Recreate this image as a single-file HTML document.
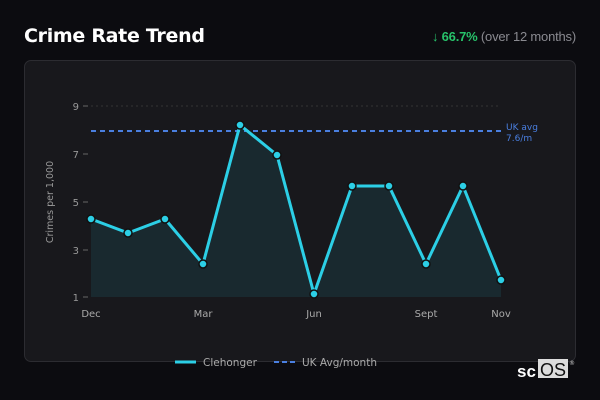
<!DOCTYPE html>
<html><head><meta charset="utf-8"><style>
body{margin:0;width:600px;height:400px;background:#0c0c10;font-family:"Liberation Sans","DejaVu Sans",sans-serif;position:relative;overflow:hidden}
.t{position:absolute;left:24px;top:25px;color:#fff;font-weight:bold;font-size:19px;font-family:"DejaVu Sans",sans-serif;letter-spacing:-0.3px}
.r{position:absolute;right:24px;top:29px;font-size:13px;color:#8a8a90;font-family:"Liberation Sans",sans-serif;letter-spacing:-0.2px}
.r b{color:#27c26a}
.card{position:absolute;left:24px;top:60px;width:550px;height:300px;border:1px solid #2c2c31;border-radius:7px;background:#18181c}
svg{position:absolute;left:0;top:0}
</style></head><body>
<div class="t">Crime Rate Trend</div>
<div class="r"><b>↓ 66.7%</b> (over 12 months)</div>
<div class="card"></div>
<svg width="600" height="400" font-family="DejaVu Sans,sans-serif">
<line x1="91" y1="106" x2="501" y2="106" stroke="#333" stroke-dasharray="2,3"/>
<g fill="#999" font-size="10" text-anchor="end">
<text x="79" y="110">9</text><text x="79" y="158">7</text><text x="79" y="206">5</text><text x="79" y="254">3</text><text x="79" y="301">1</text></g>
<g stroke="#666"><line x1="83" y1="106" x2="88" y2="106"/><line x1="83" y1="154" x2="88" y2="154"/><line x1="83" y1="202" x2="88" y2="202"/><line x1="83" y1="250" x2="88" y2="250"/><line x1="83" y1="297" x2="88" y2="297"/></g>
<text transform="translate(53,202) rotate(-90)" fill="#999" font-size="9.5" text-anchor="middle">Crimes per 1,000</text>
<polygon fill="#19292f" points="91,297 91,219 128,233 165,219 203,264 240,125 277,155 314,294 352,186 389,186 426,264 463,186 501,280 501,297"/>
<line x1="91" y1="131" x2="501" y2="131" stroke="#4a7fe0" stroke-width="2" stroke-dasharray="5,4"/>
<text x="506" y="130" fill="#4a7fe0" font-size="9">UK avg</text><text x="506" y="141" fill="#4a7fe0" font-size="9">7.6/m</text>
<polyline fill="none" stroke="#2ccfe6" stroke-width="3" stroke-linejoin="round" points="91,219 128,233 165,219 203,264 240,125 277,155 314,294 352,186 389,186 426,264 463,186 501,280"/>
<g fill="#2ccfe6" stroke="#111" stroke-width="1.5">
<circle cx="91" cy="219" r="4"/><circle cx="128" cy="233" r="4"/><circle cx="165" cy="219" r="4"/><circle cx="203" cy="264" r="4"/><circle cx="240" cy="125" r="4"/><circle cx="277" cy="155" r="4"/><circle cx="314" cy="294" r="4"/><circle cx="352" cy="186" r="4"/><circle cx="389" cy="186" r="4"/><circle cx="426" cy="264" r="4"/><circle cx="463" cy="186" r="4"/><circle cx="501" cy="280" r="4"/></g>
<g fill="#aaa" font-size="10" text-anchor="middle">
<text x="91" y="317">Dec</text><text x="203" y="317">Mar</text><text x="314" y="317">Jun</text><text x="426" y="317">Sept</text><text x="501" y="317">Nov</text></g>
<line x1="175" y1="362" x2="196" y2="362" stroke="#2ccfe6" stroke-width="3"/>
<text x="203" y="366" fill="#aaa" font-size="10.5">Clehonger</text>
<line x1="274" y1="362" x2="295" y2="362" stroke="#4a7fe0" stroke-width="2" stroke-dasharray="5,3"/>
<text x="302" y="366" fill="#aaa" font-size="10.5">UK Avg/month</text>
<text x="517" y="377" fill="#fff" font-size="17" font-weight="bold" font-family="Liberation Sans,sans-serif">sc</text>
<rect x="538" y="359" width="30" height="19" fill="#ddd"/>
<text x="540" y="376" fill="#111" font-size="18" font-family="Liberation Sans,sans-serif">OS</text>
<text x="569" y="365" fill="#ccc" font-size="6">®</text>
</svg>
</body></html>
